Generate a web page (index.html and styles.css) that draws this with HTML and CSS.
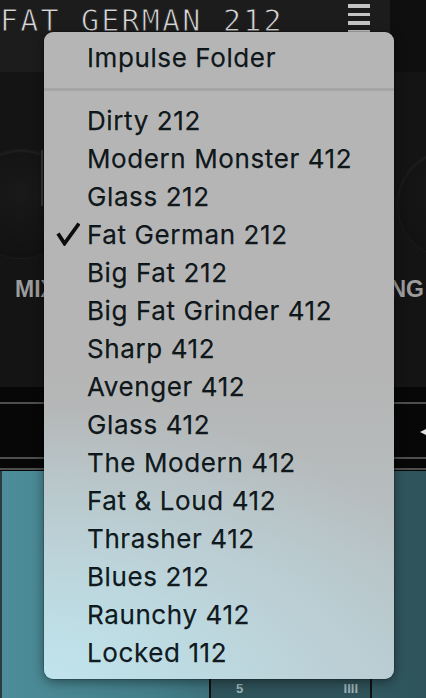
FILE: index.html
```html
<!DOCTYPE html>
<html>
  <head>
    <title>Impulse menu</title>
    <link rel="stylesheet" href="styles.css">
  </head>
  <body>
    <div class="app">
      <header class="topbar">
        <div class="topbar-main">
          <div class="lcd">FAT GERMAN 212</div>
          <div class="burger"><span></span><span></span><span></span><span></span></div>
        </div>
        <div class="topbar-side"></div>
      </header>

      <section class="knobs">
        <div class="knob-row">
          <div class="knob"><i class="knob-mark"></i></div>
          <div class="knob"></div>
        </div>
        <div class="label-row">
          <span class="label">MIX</span>
          <span class="label label-right">NG</span>
        </div>
      </section>

      <section class="strip">
        <div class="strip-line"></div>
        <div class="strip-mid"><span class="arrow"></span></div>
        <div class="strip-line"></div>
        <div class="strip-gap"></div>
        <div class="strip-line"></div>
      </section>

      <section class="teal">
        <div class="teal-edge"></div>
        <div class="teal-body">
          <div class="meter">
            <div class="meter-top"><span class="seg-dark"></span><span class="seg-grey"></span></div>
            <div class="meter-text"><span>5</span><span>IIII</span></div>
          </div>
        </div>
      </section>

      <div class="menu">
        <div class="menu-item menu-title"><span class="check"></span>Impulse Folder</div>
        <div class="menu-sep"></div>
        <div class="menu-item"><span class="check"></span>Dirty 212</div>
        <div class="menu-item"><span class="check"></span>Modern Monster 412</div>
        <div class="menu-item"><span class="check"></span>Glass 212</div>
        <div class="menu-item">
          <span class="check">
            <svg width="24" height="24" viewBox="0 0 24 24"><path d="M2 11.5 L8.5 21.5 L23 1.5" fill="none" stroke="#0c0c0c" stroke-width="3.8" stroke-linejoin="miter"/></svg>
          </span>Fat German 212
        </div>
        <div class="menu-item"><span class="check"></span>Big Fat 212</div>
        <div class="menu-item"><span class="check"></span>Big Fat Grinder 412</div>
        <div class="menu-item"><span class="check"></span>Sharp 412</div>
        <div class="menu-item"><span class="check"></span>Avenger 412</div>
        <div class="menu-item"><span class="check"></span>Glass 412</div>
        <div class="menu-item"><span class="check"></span>The Modern 412</div>
        <div class="menu-item"><span class="check"></span>Fat &amp; Loud 412</div>
        <div class="menu-item"><span class="check"></span>Thrasher 412</div>
        <div class="menu-item"><span class="check"></span>Blues 212</div>
        <div class="menu-item"><span class="check"></span>Raunchy 412</div>
        <div class="menu-item"><span class="check"></span>Locked 112</div>
      </div>
    </div>
  </body>
</html>
```

FILE: styles.css
```css
body {
  margin: 0;
  background: #141414;
  font-family: Inter, "Noto Sans", sans-serif;
}
.app {
  position: relative;
  width: 426px;
  height: 698px;
  overflow: hidden;
  display: flex;
  flex-direction: column;
}

/* top bar */
.topbar {
  display: flex;
  height: 72px;
}
.topbar-main {
  width: 390px;
  display: flex;
  background: #1c1c1c;
}
.topbar-side {
  flex: 1;
  background: #0f0f0f;
}
.lcd {
  padding-top: 3px;
  font-family: "DejaVu Sans Mono", monospace;
  font-size: 30px;
  letter-spacing: 2.2px;
  color: #d8d8d8;
  -webkit-text-stroke: 0.9px #1c1c1c;
  white-space: nowrap;
}
.burger {
  margin-left: auto;
  margin-right: 20px;
  padding-top: 4px;
  display: flex;
  flex-direction: column;
  gap: 5px;
}
.burger span {
  display: block;
  width: 22px;
  height: 3.5px;
  background: #c4c4c4;
}

/* knobs */
.knobs {
  height: 315px;
  background: #141414;
}
.knob-row {
  display: flex;
  justify-content: space-between;
  margin: 78px -80px 0 -33px;
}
.knob {
  position: relative;
  width: 108px;
  height: 108px;
  border-radius: 50%;
  background: radial-gradient(circle at 50% 40%, #191919 0%, #121212 70%, #0e0e0e 100%);
  box-shadow: inset 0 2px 2px rgba(255, 255, 255, 0.05), 0 0 0 1px #1c1c1c;
}
.knob-mark {
  position: absolute;
  left: 74px;
  top: 0;
  width: 2px;
  height: 56px;
  background: #383838;
}
.label-row {
  display: flex;
  justify-content: space-between;
  margin-top: 18px;
  padding-left: 15px;
  padding-right: 2px;
}
.label {
  font-family: "Liberation Sans", Arial, sans-serif;
  font-size: 23px;
  font-weight: bold;
  color: #9c9c9c;
}

/* black strip */
.strip {
  height: 84px;
  background: #070707;
  display: flex;
  flex-direction: column;
  padding-top: 15px;
  box-sizing: border-box;
}
.strip-line {
  height: 2px;
  background: #4e4e4e;
}
.strip-mid {
  height: 53px;
  position: relative;
}
.strip-gap {
  height: 9px;
}
.arrow {
  position: absolute;
  right: 0;
  top: 25px;
  width: 0;
  height: 0;
  border-top: 3px solid transparent;
  border-bottom: 3px solid transparent;
  border-right: 6px solid #e0e0e0;
}

/* teal area */
.teal {
  flex: 1;
  display: flex;
}
.teal-edge {
  width: 2px;
  background: #2b3b3f;
}
.teal-body {
  flex: 1;
  display: flex;
  align-items: flex-end;
  background: linear-gradient(to right, #4c8d99 0%, #437e89 35%, #34616a 70%, #2e535a 100%);
}
.meter {
  margin-left: 207px;
  width: 159px;
  height: 24px;
  border-left: 2px solid #111;
  border-right: 2px solid #111;
  background: #2f535a;
}
.meter-top {
  display: flex;
  gap: 26px;
  padding-left: 5px;
}
.seg-dark {
  width: 34px;
  height: 3px;
  background: #0d0d0d;
}
.seg-grey {
  width: 27px;
  height: 3px;
  background: #6c7c80;
}
.meter-text {
  display: flex;
  justify-content: space-between;
  padding: 5px 12px 0 25px;
  font-family: "Liberation Sans", Arial, sans-serif;
  font-size: 13px;
  line-height: 14px;
  font-weight: bold;
  color: #9fb3b7;
}

/* popup menu */
.menu {
  position: absolute;
  left: 44px;
  top: 32px;
  width: 350px;
  padding: 6px 0 8px;
  border-radius: 9px;
  background:
    radial-gradient(130% 42% at 0% 100%, rgba(192, 228, 237, 1) 0%, rgba(192, 228, 237, 0) 100%),
    linear-gradient(to bottom, #b5b5b5 0%, #b5b5b5 52%, #b8c6ca 100%);
  box-shadow: 0 3px 12px rgba(0, 0, 0, 0.45), 0 0 0 0.5px rgba(0, 0, 0, 0.3);
}
.menu-item {
  display: flex;
  align-items: center;
  height: 38px;
  font-size: 26px;
  letter-spacing: 0.6px;
  color: rgba(0, 8, 12, 0.93);
  -webkit-text-stroke: 0.25px rgba(0, 8, 12, 0.9);
  white-space: nowrap;
}
.check {
  width: 31px;
  margin-left: 12px;
  height: 24px;
  display: flex;
}
.menu-sep {
  height: 3px;
  margin: 12px 0 10px;
  background: #a5a5a5;
}
```
